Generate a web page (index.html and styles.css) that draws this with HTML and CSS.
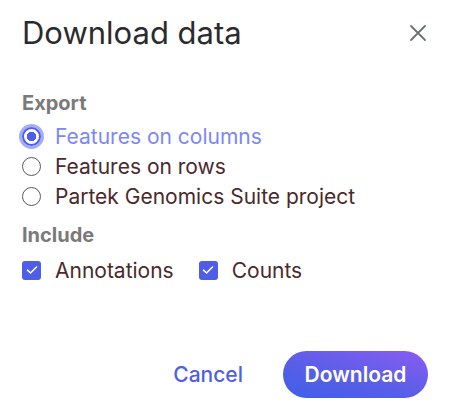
FILE: index.html
```html
<!DOCTYPE html>
<html lang="en">
<head>
<meta charset="utf-8">
<title>Download data</title>
<link rel="stylesheet" href="styles.css">
</head>
<body>
<div class="dialog">
  <div class="header">
    <h1 class="title">Download data</h1>
    <button class="close" aria-label="Close">
      <svg width="18" height="18" viewBox="0 0 18 18"><path d="M2 2L16 16M16 2L2 16" stroke="#6b7079" stroke-width="1.8" stroke-linecap="round" fill="none"/></svg>
    </button>
  </div>
  <div class="section">
    <div class="label">Export</div>
    <div class="options">
      <label class="option selected"><span class="radio checked"></span><span>Features on columns</span></label>
      <label class="option"><span class="radio"></span><span>Features on rows</span></label>
      <label class="option"><span class="radio"></span><span>Partek Genomics Suite project</span></label>
    </div>
  </div>
  <div class="section include">
    <div class="label">Include</div>
    <div class="checks">
      <label class="check"><span class="box"><svg width="12" height="10" viewBox="0 0 12 10"><path d="M1.5 5.2L4.5 8L10.5 2" stroke="#fff" stroke-width="1.6" fill="none" stroke-linecap="round" stroke-linejoin="round"/></svg></span><span>Annotations</span></label>
      <label class="check"><span class="box"><svg width="12" height="10" viewBox="0 0 12 10"><path d="M1.5 5.2L4.5 8L10.5 2" stroke="#fff" stroke-width="1.6" fill="none" stroke-linecap="round" stroke-linejoin="round"/></svg></span><span>Counts</span></label>
    </div>
  </div>
  <div class="footer">
    <button class="cancel">Cancel</button>
    <button class="download">Download</button>
  </div>
</div>
</body>
</html>
```
FILE: styles.css
```css
html, body {
  margin: 0;
  padding: 0;
  background: #ffffff;
}
body {
  font-family: Inter, "Noto Sans", sans-serif;
  width: 459px;
  height: 415px;
  overflow: hidden;
}
.dialog {
  padding: 14px 31px 0 22px;
  display: flex;
  flex-direction: column;
}
.header {
  display: flex;
  justify-content: space-between;
  align-items: center;
}
.title {
  margin: 0;
  font-size: 31px;
  font-weight: 400;
  color: #2b2b2e;
  line-height: 38px;
}
.close {
  border: 0;
  background: none;
  padding: 0;
  width: 20px;
  height: 20px;
  display: flex;
  align-items: center;
  justify-content: center;
}
.section {
  margin-top: 39px;
  display: flex;
  flex-direction: column;
}
.label {
  font-size: 20px;
  font-weight: 700;
  color: #7a7a7a;
  line-height: 24px;
}
.options {
  margin-top: 6px;
  display: flex;
  flex-direction: column;
}
.option {
  display: flex;
  align-items: center;
  gap: 14px;
  height: 30px;
  font-size: 21px;
  color: #4a2a2c;
}
.option.selected {
  color: #7c87f7;
}
.radio {
  width: 19px;
  height: 19px;
  border: 1.6px solid #5a5a5a;
  border-radius: 50%;
  box-sizing: border-box;
  flex: none;
}
.radio.checked {
  border: 2.5px solid #4c5eef;
  background: radial-gradient(circle, #4c5eef 0 4.5px, #ffffff 5px);
  box-shadow: 0 0 0 3px #a3acf9;
}
.include {
  margin-top: 12px;
}
.checks {
  display: flex;
  gap: 25px;
  margin-top: 8px;
}
.check {
  display: flex;
  align-items: center;
  gap: 14px;
  font-size: 21px;
  color: #4a2a2c;
  height: 30px;
}
.box {
  width: 19px;
  height: 19px;
  border-radius: 3px;
  background: #4f5ee8;
  display: flex;
  align-items: center;
  justify-content: center;
  flex: none;
}
.footer {
  margin-top: 66px;
  display: flex;
  justify-content: flex-end;
  align-items: center;
  gap: 40px;
}
.cancel {
  border: 0;
  background: none;
  font-family: inherit;
  font-size: 21px;
  font-weight: 500;
  color: #4f5ee6;
  padding: 0;
}
.download {
  border: 0;
  font-family: inherit;
  font-size: 21px;
  font-weight: 600;
  color: #ffffff;
  width: 145px;
  height: 47px;
  border-radius: 24px;
  background: linear-gradient(195deg, #8a5cf2 0%, #5a5ee8 55%, #3e5fe6 100%);
  padding: 0;
}
```
